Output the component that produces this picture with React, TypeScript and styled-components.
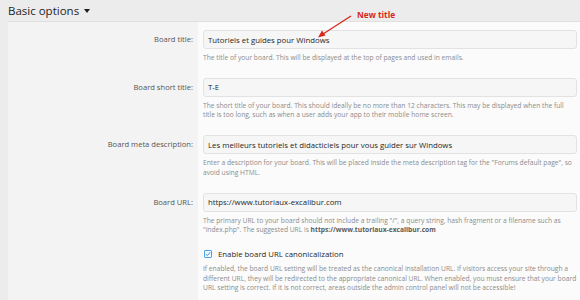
import React, { FC } from 'react';
import styled, { createGlobalStyle } from 'styled-components';

const GlobalStyle = createGlobalStyle`
  html, body {
    margin: 0;
    padding: 0;
    background: #ececec;
    font-family: "Open Sans", "Noto Sans", sans-serif;
    overflow: hidden;
  }
`;

interface RowProps {
  label?: string;
  value?: string;
  checkbox?: string;
  children?: React.ReactNode;
}

const FormRow: FC<RowProps> = ({ label, value, checkbox, children }) => (
  <Row>
    <Term>{label}</Term>
    <Field $tight={!!checkbox}>
      {value !== undefined && <Input>{value}</Input>}
      {checkbox && (
        <CheckLine>
          <Box>
            <svg width='6' height='6' viewBox='0 0 6 6'>
              <path d='M0.8 3.1 L2.4 4.6 L5.2 1.2' fill='none' stroke='#3b98de' strokeWidth='1' />
            </svg>
          </Box>
          {checkbox}
        </CheckLine>
      )}
      <Hint>{children}</Hint>
    </Field>
  </Row>
);

export default function App() {
  return (
    <Page>
      <GlobalStyle />
      <Heading>
        Basic options
        <Caret />
      </Heading>

      <Block>
        <FormRow label='Board title:' value='Tutoriels et guides pour Windows'>
          The title of your board. This will be displayed at the top of pages and used in emails.
        </FormRow>
        <FormRow label='Board short title:' value='T-E'>
          The short title of your board. This should ideally be no more than 12 characters. This may be displayed when the full
          title is too long, such as when a user adds your app to their mobile home screen.
        </FormRow>
        <FormRow label='Board meta description:' value='Les meilleurs tutoriels et didacticiels pour vous guider sur Windows'>
          Enter a description for your board. This will be placed inside the meta description tag for the "Forums default page", so
          avoid using HTML.
        </FormRow>
        <FormRow label='Board URL:' value='https://www.tutoriaux-excalibur.com'>
          The primary URL to your board should not include a trailing "/", a query string, hash fragment or a filename such as
          "index.php". The suggested URL is <Strong>https://www.tutoriaux-excalibur.com</Strong>
        </FormRow>
        <FormRow checkbox='Enable board URL canonicalization'>
          If enabled, the board URL setting will be treated as the canonical installation URL. If visitors access your site through a
          different URL, they will be redirected to the appropriate canonical URL. When enabled, you must ensure that your board
          URL setting is correct. If it is not correct, areas outside the admin control panel will not be accessible!
        </FormRow>
      </Block>

      <Note>New title</Note>
      <Arrow width='40' height='28' viewBox='0 0 40 28'>
        <line x1='36' y1='3' x2='8' y2='21' stroke='#d8261b' strokeWidth='1.3' />
        <polygon points='3,24.5 7,17.5 10.5,22.5' fill='#d8261b' />
      </Arrow>
    </Page>
  );
}

const Page = styled.div`
  position: relative;
  width: 580px;
  height: 300px;
  overflow: hidden;
`;

const Heading = styled.h2`
  margin: 0;
  height: 21px;
  padding-left: 8px;
  display: flex;
  align-items: center;
  font-size: 11.5px;
  font-weight: normal;
  color: #1e1e1e;
`;

const Caret = styled.span`
  display: inline-block;
  margin-left: 5px;
  margin-top: 1px;
  border-left: 3px solid transparent;
  border-right: 3px solid transparent;
  border-top: 4px solid #1e1e1e;
`;

const Block = styled.div`
  margin-left: 8px;
  border-top: 1px solid #e0e0e0;
  display: flex;
  flex-direction: column;
`;

const Row = styled.dl`
  margin: 0;
  display: grid;
  grid-template-columns: 190px 1fr;
`;

const Term = styled.dt`
  background: #f3f3f3;
  padding: 8px 5px 0 0;
  text-align: right;
  font-size: 7.6px;
  line-height: 19px;
  color: #555;
`;

const Field = styled.dd<{ $tight?: boolean }>`
  margin: 0;
  background: #fbfbfb;
  padding: ${p => (p.$tight ? '6px' : '8px')} 3px 7px 5px;
`;

const Input = styled.div`
  box-sizing: border-box;
  height: 19px;
  padding: 0 4px;
  display: flex;
  align-items: center;
  background: #f6f6f6;
  border: 1px solid #e2e2e2;
  border-radius: 3px;
  font-size: 7.8px;
  color: #262626;
  white-space: nowrap;
`;

const CheckLine = styled.div`
  height: 12px;
  display: flex;
  align-items: center;
  gap: 6px;
  padding-left: 1px;
  font-size: 7.8px;
  color: #262626;
`;

const Box = styled.span`
  box-sizing: border-box;
  width: 8px;
  height: 8px;
  display: flex;
  align-items: center;
  justify-content: center;
  border: 1px solid #4aa3e6;
  border-radius: 1px;
  background: #f4f9fd;
`;

const Hint = styled.div`
  margin-top: 4px;
  font-size: 6.7px;
  line-height: 9.7px;
  color: #8c8c8c;
`;

const Strong = styled.span`
  font-weight: bold;
  color: #5a5a5a;
`;

const Note = styled.span`
  position: absolute;
  left: 357px;
  top: 9px;
  font-size: 8.3px;
  font-weight: bold;
  color: #d8261b;
`;

const Arrow = styled.svg`
  position: absolute;
  left: 315px;
  top: 13px;
`;
